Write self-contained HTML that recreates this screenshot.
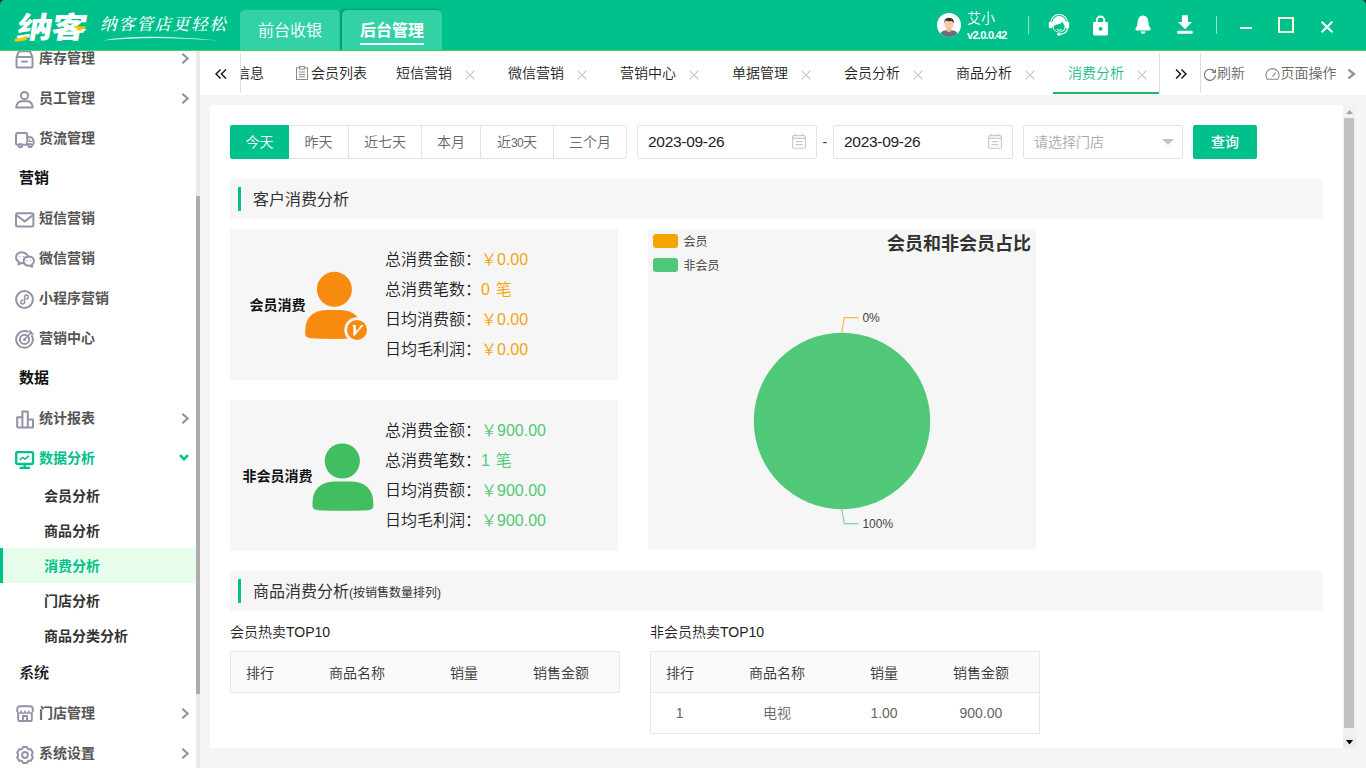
<!DOCTYPE html>
<html lang="zh-CN">
<head>
<meta charset="utf-8">
<title>纳客 - 消费分析</title>
<style>
*{box-sizing:border-box;margin:0;padding:0}
html,body{width:1366px;height:768px;overflow:hidden;background:#f5f5f5}
body{font-family:"Liberation Sans","Noto Sans CJK SC",sans-serif;font-size:14px;color:#333;position:relative;font-weight:350}
.abs{position:absolute}
.t{position:absolute;white-space:nowrap;line-height:20px;height:20px}
svg{display:block;position:absolute;overflow:visible}

/* ---------- top header ---------- */
#hdr{position:absolute;left:0;top:0;width:1366px;height:51px;background:#00c08b;border-bottom:1px solid #46d665}
.htab{position:absolute;top:10px;height:40px;width:100px;background:#33d1a6;border-radius:5px 5px 0 0;color:#fff;font-size:16px;line-height:42px;text-align:center}
.hsep{position:absolute;top:16px;width:1px;height:18px;background:rgba(255,255,255,.55)}

/* ---------- sidebar ---------- */
#side{position:absolute;left:0;top:51px;width:200px;height:717px;background:#fff;overflow:hidden}
.mi{position:absolute;left:39px;font-size:14px;font-weight:bold;color:#555;line-height:20px;white-space:nowrap}
.mh{position:absolute;left:19px;font-size:15px;font-weight:bold;color:#111;line-height:20px;white-space:nowrap}
.ms{position:absolute;left:44px;font-size:14px;font-weight:bold;color:#333;line-height:20px;white-space:nowrap}

/* ---------- tab strip ---------- */
#tabs{position:absolute;left:200px;top:51px;width:1166px;height:44px;background:#fff}
.tb{position:absolute;top:12px;font-size:14px;line-height:20px;color:#222;white-space:nowrap}
.vl{position:absolute;top:2px;width:1px;height:40px;background:#ddd}

/* ---------- main panel ---------- */
#panel{position:absolute;left:210px;top:105px;width:1133px;height:643px;background:#fff}

/* panel content */
.bg{position:absolute;top:20px;height:34px;border:1px solid #e2e2e2;border-left:none;background:#fff;color:#666;font-size:14px;line-height:32px;text-align:center;white-space:nowrap}
.inp{position:absolute;top:20px;height:34px;border:1px solid #e2e2e2;border-radius:2px;background:#fff;font-size:14px;line-height:32px;padding-left:10px;color:#222;white-space:nowrap}
.sec{position:absolute;left:20px;width:1093px;height:40px;background:#f6f6f6}
.sec i{position:absolute;left:8px;top:8px;width:3px;height:24px;background:#00c08b}
.sec b{position:absolute;left:23px;top:0;font-weight:normal;font-size:16px;line-height:42px;color:#333;white-space:nowrap}
.card{position:absolute;left:20px;width:388px;height:151px;background:#f6f6f6}
.ct{position:absolute;font-size:14px;font-weight:bold;color:#111;line-height:20px;white-space:nowrap}
.row{position:absolute;left:155px;font-size:16px;line-height:30px;height:30px;color:#222;white-space:nowrap}
.row span{position:absolute;left:96px;top:0}
.or{color:#f4a40f}.gr{color:#50c878}
.tt{position:absolute;font-size:14px;line-height:20px;color:#222;white-space:nowrap}
.tbl{position:absolute;width:390px;border:1px solid #e8e8e8;background:#fff}
.tbl .hd{position:relative;height:40px;background:#fafafa;color:#333}
.tbl .rw{position:relative;height:41px;border-top:1px solid #e8e8e8;color:#666}
.tbl span{position:absolute;top:0;line-height:41px;font-size:14px;white-space:nowrap}
.tbl .hd span{line-height:42px}
.tbl .rw span{transform:translateX(-50%)}
</style>
</head>
<body>
<div id="hdr">
  <!-- window corner notches -->
  <svg width="5" height="5" style="left:0;top:0"><path d="M0 0H4.6A4.6 4.6 0 0 0 0 4.6Z" fill="#35232a"/></svg>
  <svg width="5" height="5" style="left:1361px;top:0"><path d="M5 0H.4A4.6 4.6 0 0 1 5 4.6Z" fill="#35232a"/></svg>
  <!-- logo -->
  <div class="abs" id="logo" style="left:17.5px;top:2.5px;width:64px;height:44px;font-family:'Noto Sans CJK SC',sans-serif;font-weight:900;font-size:29.5px;line-height:44px;color:#fff;white-space:nowrap;transform-origin:0 50%;transform:scaleX(1.2) skewX(-8deg);letter-spacing:-1px">纳客</div>
  <svg width="90" height="50" style="left:0;top:0">
    <path d="M15 38.5Q21 38.8 27.5 35.5L26.5 40Q21 42 14.5 41.2Z" fill="#fdc40a"/>
    <path d="M73 25.8Q79 27 86.5 26.2Q83 30.5 78.5 30.8Q76 28 73 25.8Z" fill="#fdc40a"/>
  </svg>
  <div class="abs" id="slogan" style="left:100px;top:11px;font-family:'Noto Serif CJK SC',serif;font-style:italic;font-weight:500;font-size:16.5px;line-height:24px;letter-spacing:1.7px;color:#fff;white-space:nowrap">纳客管店更轻松</div>
  <svg width="130" height="10" style="left:100px;top:34px"><path d="M3 6.5Q40 -1 118 6.5Q50 1.5 3 6.5Z" fill="#fff" opacity=".92"/></svg>
  <!-- module tabs -->
  <div class="htab" style="left:240px">前台收银</div>
  <div class="htab" style="left:342px;font-weight:bold;box-shadow:-1.5px -.5px 2px rgba(0,70,45,.32)">后台管理<i class="abs" style="left:18px;top:33px;width:64px;height:2px;background:#fff"></i></div>
  <!-- user -->
  <svg width="24" height="24" viewBox="0 0 24 24" style="left:937px;top:13px">
    <defs><clipPath id="avc"><circle cx="12" cy="12" r="12"/></clipPath></defs>
    <circle cx="12" cy="12" r="12" fill="#fff"/>
    <g clip-path="url(#avc)">
      <path d="M2.5 24Q3 17.5 9 17.2H15Q21 17.5 21.5 24Z" fill="#6d7080"/>
      <path d="M9.8 14.5H14.2V18.2Q12 19.6 9.8 18.2Z" fill="#efb98f"/>
      <ellipse cx="12" cy="11.2" rx="4.5" ry="5.2" fill="#f6c9a2"/>
      <path d="M7.2 10.8Q6.6 5 12 4.8Q17.6 5 16.8 10.8Q16.2 8.4 14.6 7.9Q11 8.6 8.6 7.6Q7.6 8.6 7.2 10.8Z" fill="#333"/>
    </g>
  </svg>
  <div class="t" style="left:967px;top:8px;font-size:14px;color:#fff">艾小</div>
  <div class="t" style="left:967px;top:25px;font-size:11px;font-weight:bold;color:#fff;letter-spacing:-.7px">v2.0.0.42</div>
  <i class="hsep" style="left:1028px"></i>
  <!-- headset -->
  <svg width="22" height="23" viewBox="0 0 22 23" style="left:1048px;top:13px" fill="none" stroke="#fff">
    <path d="M2.7 10A8.4 8.6 0 0 1 19.5 10" stroke-width="1.1"/>
    <ellipse cx="11.2" cy="11.3" rx="7.3" ry="8.3" fill="#fff" stroke="none"/>
    <path d="M5.6 13.4Q6.2 11.6 9.4 11.4Q12.6 11.2 14 9.2Q14.6 8.6 14.9 9.4Q15.4 11.4 16.6 12.6Q17 16 14.2 18Q11.2 19.6 8.2 18Q5.2 16.2 5.6 13.4Z" fill="#00c08b" stroke="none"/>
    <path d="M9.2 16.8Q11.2 17.8 13.4 16.8" stroke-width="1" stroke-linecap="round"/>
    <rect x=".8" y="8.8" width="3.6" height="6.5" rx="1.4" fill="#fff" stroke="none"/>
    <rect x="17.7" y="8.8" width="3.5" height="6.7" rx="1.4" fill="#fff" stroke="none"/>
    <path d="M19.6 15Q19 20.4 12.4 21.3" stroke-width="1.2"/>
    <ellipse cx="10.9" cy="21.4" rx="1.8" ry="1.3" fill="#fff" stroke="none"/>
  </svg>
  <!-- lock -->
  <svg width="16" height="21" viewBox="0 0 16 21" style="left:1093px;top:15px">
    <path d="M3.8 8V5.4A3.7 3.8 0 0 1 11.2 5.4V8" fill="none" stroke="#fff" stroke-width="2"/>
    <rect x="0" y="7" width="15" height="13.5" rx="1.4" fill="#fff"/>
    <circle cx="7.5" cy="13.8" r="1.9" fill="#00c08b"/>
  </svg>
  <!-- bell -->
  <svg width="16" height="19" viewBox="0 0 16 19" style="left:1135px;top:15px">
    <path d="M8 0.5Q13.2 1 13.4 7.2Q13.5 11.6 15.6 13.6Q16 15.4 14.6 15.4H1.4Q0 15.4 .4 13.6Q2.5 11.6 2.6 7.2Q2.8 1 8 .5Z" fill="#fff"/>
    <path d="M5.4 16.6H10.6Q10.2 18.8 8 18.8Q5.8 18.8 5.4 16.6Z" fill="#fff"/>
  </svg>
  <!-- download -->
  <svg width="16" height="19" viewBox="0 0 16 19" style="left:1177px;top:15px">
    <path d="M5 .8Q5 .3 5.6 .3H10.4Q11 .3 11 .8V7H15L8 14.2L1 7H5Z" fill="#fff"/>
    <rect x=".3" y="15.8" width="15.4" height="2.9" rx="1" fill="#fff"/>
  </svg>
  <i class="hsep" style="left:1216px"></i>
  <!-- window buttons -->
  <i class="abs" style="left:1240px;top:27px;width:12px;height:2px;background:#fff"></i>
  <i class="abs" style="left:1278px;top:17px;width:16px;height:16px;border:2px solid #f4f9dc"></i>
  <svg width="12" height="12" viewBox="0 0 12 12" style="left:1320.5px;top:20.5px"><path d="M.7 .7L11.3 11.3M11.3 .7L.7 11.3" stroke="#fff" stroke-width="2" fill="none"/></svg>
</div>
<div id="side">
  <svg width="19" height="19" viewBox="0 0 19 19" style="left:15px;top:-1.2px" fill="none" stroke="#9193a6" stroke-width="2" stroke-linejoin="round"><path d="M1.5 7.2L3.6 2.2Q4 1.2 5 1.2H14Q15 1.2 15.4 2.2L17.5 7.2"/><rect x="1.5" y="7" width="16" height="10.6" rx="1.6"/><path d="M6.2 11.6H12.8" stroke-width="2"/></svg>
  <div class="mi" style="top:-3px;color:#555">库存管理</div>
  <svg width="8" height="11" viewBox="0 0 8 11" style="left:181px;top:2.0px"><path d="M1.4 .8L6.6 5.5L1.4 10.2" fill="none" stroke="#9193a6" stroke-width="2.2"/></svg>
  <svg width="19" height="19" viewBox="0 0 19 19" style="left:15px;top:38.8px" fill="none" stroke="#9193a6" stroke-width="2" stroke-linejoin="round"><circle cx="9.5" cy="5.6" r="3.6"/><path d="M1.2 17.4Q1.8 11.6 6.4 11.2H12.6Q17.2 11.6 17.8 17.4Z"/></svg>
  <div class="mi" style="top:37px;color:#555">员工管理</div>
  <svg width="8" height="11" viewBox="0 0 8 11" style="left:181px;top:42.0px"><path d="M1.4 .8L6.6 5.5L1.4 10.2" fill="none" stroke="#9193a6" stroke-width="2.2"/></svg>
  <svg width="20" height="18" viewBox="0 0 20 18" style="left:15px;top:80px" fill="none" stroke="#9193a6" stroke-width="2" stroke-linejoin="round"><path d="M12.2 13.8H7.6M3.2 13.8H2.4Q1 13.8 1 12.4V3.4Q1 2 2.4 2H10.8Q12.2 2 12.2 3.4V13.8"/><path d="M12.2 6.2H15.6Q17 6.2 17.6 7.4L18.6 9.6V12.6Q18.6 13.8 17.4 13.8H16.8M13.6 13.8H12.2"/><circle cx="5.4" cy="14.6" r="1.7"/><circle cx="15.2" cy="14.6" r="1.7"/><path d="M14.4 8.4V10.4H17.6" stroke-width="1.3"/></svg>
  <div class="mi" style="top:77px;color:#555">货流管理</div>
  <div class="mh" style="top:117px;">营销</div>
  <svg width="20" height="16" viewBox="0 0 20 16" style="left:15px;top:160.6px" fill="none" stroke="#9193a6" stroke-width="2" stroke-linejoin="round"><rect x="1" y="1.2" width="17.4" height="13.2" rx="1.6"/><path d="M1.6 3.2L9.7 9.4L17.8 3.2"/></svg>
  <div class="mi" style="top:157px;color:#555">短信营销</div>
  <svg width="20" height="17" viewBox="0 0 20 17" style="left:15px;top:199.8px" fill="none" stroke="#9193a6" stroke-width="2" stroke-linejoin="round"><path d="M9.4 11.8Q7.8 12.4 6.2 12L3.4 13.4L3.8 10.8Q1 9 1 6.4Q1 3.6 3.4 2.2Q5.6 1 8.2 1.4Q11.6 2 12.8 5"/><path d="M13.6 5.4Q16.4 5.4 18 7.2Q19.6 9.2 18.6 11.6Q18 12.8 16.8 13.6L17.2 15.8L14.8 14.6Q11.6 15.2 9.6 13Q8 11 8.8 8.6Q10 5.6 13.6 5.4Z"/><circle cx="5" cy="5.6" r=".7" fill="#9193a6" stroke="none"/><circle cx="8.6" cy="5.6" r=".7" fill="#9193a6" stroke="none"/><circle cx="11.8" cy="9.6" r=".7" fill="#9193a6" stroke="none"/><circle cx="15.4" cy="9.6" r=".7" fill="#9193a6" stroke="none"/></svg>
  <div class="mi" style="top:197px;color:#555">微信营销</div>
  <svg width="19" height="19" viewBox="0 0 19 19" style="left:15px;top:238.8px" fill="none" stroke="#9193a6" stroke-width="2" stroke-linejoin="round"><circle cx="9.5" cy="9.5" r="8.4"/><path d="M9.6 7.2Q9.6 5 11.6 5Q13.6 5.2 13.4 7.2Q13.2 8.8 11.4 9M9.6 7.2V11.8Q9.6 14 7.6 14Q5.6 13.8 5.8 11.8Q6 10.2 7.8 10" stroke-width="1.5" stroke-linecap="round"/></svg>
  <div class="mi" style="top:237px;color:#555">小程序营销</div>
  <svg width="20" height="20" viewBox="0 0 20 20" style="left:15px;top:277.8px" fill="none" stroke="#9193a6" stroke-width="2" stroke-linejoin="round"><path d="M16.6 6.4Q17.9 8 17.9 10.4A8.4 8.4 0 1 1 9.5 2Q11.8 2 13.6 3.2"/><circle cx="9.5" cy="10.4" r="4.6"/><circle cx="9.5" cy="10.4" r="1.5" fill="#9193a6" stroke="none"/><path d="M9.8 10.1L17 2.8M15.2 1.2V4.8H18.6" stroke-width="1.6"/></svg>
  <div class="mi" style="top:277px;color:#555">营销中心</div>
  <div class="mh" style="top:317px;">数据</div>
  <svg width="18.5" height="19" viewBox="0 0 18.5 19" style="left:16px;top:358.8px" fill="none" stroke="#9193a6" stroke-width="2" stroke-linejoin="round"><path d="M1.2 17.4V7.2H6.4V17.4M6.4 17.4V1.4H11.8V17.4M11.8 17.4V9.6H17V17.4ZM1.2 17.4H17" /></svg>
  <div class="mi" style="top:357px;color:#555">统计报表</div>
  <svg width="8" height="11" viewBox="0 0 8 11" style="left:181px;top:362.0px"><path d="M1.4 .8L6.6 5.5L1.4 10.2" fill="none" stroke="#9193a6" stroke-width="2.2"/></svg>
  <svg width="19" height="18" viewBox="0 0 19 18" style="left:15.4px;top:399.8px" fill="none" stroke="#00c08b" stroke-width="2" stroke-linejoin="round"><rect x="1.2" y="1.2" width="16.8" height="11.8" rx="1.4" stroke-width="2.3"/><path d="M9.6 13V16.6M4.6 16.9H15" stroke-width="2.2"/><path d="M4.8 9L7.6 6.4L10 8.2L13.8 4.6" stroke-width="1.5"/></svg>
  <div class="mi" style="top:397px;color:#00c08b">数据分析</div>
  <svg width="10" height="7" viewBox="0 0 10 7" style="left:179px;top:402.5px"><path d="M1 1.2L5 5.2L9 1.2" fill="none" stroke="#00c08b" stroke-width="2.6"/></svg>
  <div class="ms" style="top:435px;color:#333">会员分析</div>
  <div class="ms" style="top:470px;color:#333">商品分析</div>
  <div class="abs" style="left:0;top:497px;width:196px;height:35px;background:#e7fdeb;border-left:3px solid #00c08b"></div>
  <div class="ms" style="top:505px;color:#00c08b">消费分析</div>
  <div class="ms" style="top:540px;color:#333">门店分析</div>
  <div class="ms" style="top:575px;color:#333">商品分类分析</div>
  <div class="mh" style="top:612px;font-family:'Liberation Serif','Noto Serif CJK SC',serif;font-weight:700;">系统</div>
  <svg width="18.2" height="17.3" viewBox="0 0 20 19" style="left:15.9px;top:653.8px" fill="none" stroke="#9193a6" stroke-width="2.1" stroke-linejoin="round"><path d="M1.4 7.8V4.4Q1.4 1.4 4.4 1.4H15.4Q18.4 1.4 18.4 4.4V7.8"/><path d="M1.4 6.6Q1.6 9 3.6 9Q5.6 9 5.7 6.6Q5.8 9 7.8 9Q9.8 9 9.9 6.6Q10 9 12 9Q14 9 14.1 6.6Q14.2 9 16.2 9Q18.2 9 18.4 6.6" stroke-width="1.5"/><path d="M2.4 9V16.4Q2.4 17.6 3.6 17.6H16.2Q17.4 17.6 17.4 16.4V9M7.6 17.6V12H12.2V17.6"/></svg>
  <div class="mi" style="top:652px;color:#555">门店管理</div>
  <svg width="8" height="11" viewBox="0 0 8 11" style="left:181px;top:657.0px"><path d="M1.4 .8L6.6 5.5L1.4 10.2" fill="none" stroke="#9193a6" stroke-width="2.2"/></svg>
  <svg width="20" height="20" viewBox="0 0 20 20" style="left:14.75px;top:693.6px" fill="none" stroke="#9193a6" stroke-width="2" stroke-linejoin="round"><path d="M12.70 3.65L11.98 2.04L8.02 2.04L7.30 3.65L5.85 4.49L4.10 4.30L2.12 7.74L3.15 9.16L3.15 10.84L2.12 12.26L4.10 15.70L5.85 15.51L7.30 16.35L8.02 17.96L11.98 17.96L12.70 16.35L14.15 15.51L15.90 15.70L17.88 12.26L16.85 10.84L16.85 9.16L17.88 7.74L15.90 4.30L14.15 4.49Z"/><circle cx="10" cy="10" r="2.9"/></svg>
  <div class="mi" style="top:692px;color:#555">系统设置</div>
  <svg width="8" height="11" viewBox="0 0 8 11" style="left:181px;top:697.0px"><path d="M1.4 .8L6.6 5.5L1.4 10.2" fill="none" stroke="#9193a6" stroke-width="2.2"/></svg>
  <div class="abs" style="left:196px;top:0;width:4px;height:717px;background:#e9e9e9"></div>
  <div class="abs" style="left:196px;top:145.0px;width:4px;height:498px;background:#adadad"></div>
</div>
<div id="tabs">
  <svg width="12" height="10" viewBox="0 0 12 10" style="left:15.400000000000006px;top:17.799999999999997px"><path d="M5.6 .4L1 5L5.6 9.6M11 .4L6.4 5L11 9.6" fill="none" stroke="#111" stroke-width="1.4"/></svg>
  <i class="vl" style="left:40px"></i>
  <div class="abs" style="left:41px;top:0;width:918px;height:44px;overflow:hidden"><div class="tb" style="left:-5px">信息</div><svg width="12" height="14" viewBox="0 0 12 14" style="left:55px;top:15px" fill="none" stroke="#8a8a8a" stroke-width="1"><rect x=".5" y="1.8" width="11" height="11.7"/><rect x="3.6" y=".5" width="4.8" height="2.6" fill="#fff"/><path d="M2.8 6H9.2M2.8 8.4H9.2M2.8 10.8H9.2"/></svg><div class="tb" style="left:70px">会员列表</div><div class="tb" style="left:155px;color:#222">短信营销</div><svg width="10" height="10" viewBox="0 0 10 10" style="left:223.60000000000002px;top:18.599999999999994px"><path d="M.6 .6L9.4 9.4M9.4 .6L.6 9.4" stroke="#c4c4c4" stroke-width="1.1" fill="none"/></svg><div class="tb" style="left:267px;color:#222">微信营销</div><svg width="10" height="10" viewBox="0 0 10 10" style="left:335.6px;top:18.599999999999994px"><path d="M.6 .6L9.4 9.4M9.4 .6L.6 9.4" stroke="#c4c4c4" stroke-width="1.1" fill="none"/></svg><div class="tb" style="left:379px;color:#222">营销中心</div><svg width="10" height="10" viewBox="0 0 10 10" style="left:447.6px;top:18.599999999999994px"><path d="M.6 .6L9.4 9.4M9.4 .6L.6 9.4" stroke="#c4c4c4" stroke-width="1.1" fill="none"/></svg><div class="tb" style="left:491px;color:#222">单据管理</div><svg width="10" height="10" viewBox="0 0 10 10" style="left:559.6px;top:18.599999999999994px"><path d="M.6 .6L9.4 9.4M9.4 .6L.6 9.4" stroke="#c4c4c4" stroke-width="1.1" fill="none"/></svg><div class="tb" style="left:603px;color:#222">会员分析</div><svg width="10" height="10" viewBox="0 0 10 10" style="left:671.6px;top:18.599999999999994px"><path d="M.6 .6L9.4 9.4M9.4 .6L.6 9.4" stroke="#c4c4c4" stroke-width="1.1" fill="none"/></svg><div class="tb" style="left:715px;color:#222">商品分析</div><svg width="10" height="10" viewBox="0 0 10 10" style="left:783.5999999999999px;top:18.599999999999994px"><path d="M.6 .6L9.4 9.4M9.4 .6L.6 9.4" stroke="#c4c4c4" stroke-width="1.1" fill="none"/></svg><i class="abs" style="left:812px;top:41px;width:112px;height:2px;background:#21b36a"></i><div class="tb" style="left:827px;color:#1abc8c">消费分析</div><svg width="10" height="10" viewBox="0 0 10 10" style="left:895.5999999999999px;top:18.599999999999994px"><path d="M.6 .6L9.4 9.4M9.4 .6L.6 9.4" stroke="#c4c4c4" stroke-width="1.1" fill="none"/></svg></div>
  <i class="vl" style="left:959px"></i>
  <svg width="12" height="10" viewBox="0 0 12 10" style="left:974.5999999999999px;top:17.799999999999997px"><path d="M1 .4L5.6 5L1 9.6M6.4 .4L11 5L6.4 9.6" fill="none" stroke="#111" stroke-width="1.4"/></svg>
  <i class="vl" style="left:1000px"></i>
  <svg width="13.6" height="13.6" viewBox="0 0 13 13" style="left:1002.6px;top:16px" fill="none" stroke="#777" stroke-width="1.1"><path d="M11.4 5.2A5.3 5.3 0 1 0 11.9 7.6"/><path d="M8.6 4.9L11.8 5.4L12 2.2" stroke-linejoin="round"/></svg>
  <div class="tb" style="left:1017px;color:#666">刷新</div>
  <svg width="15" height="12" viewBox="0 0 15 12" style="left:1065.3px;top:17.200000000000003px" fill="none" stroke="#888" stroke-width="1.1"><path d="M2.2 11.2A6.6 6.6 0 1 1 12.8 11.2Z"/><path d="M7.5 8.6L10.6 4.6"/></svg>
  <div class="tb" style="left:1080.5px;color:#666">页面操作</div>
  <svg width="9" height="10" viewBox="0 0 9 10" style="left:1146.5px;top:17.599999999999994px"><path d="M1.4 .6L7 5L1.4 9.4" fill="none" stroke="#9092a5" stroke-width="2.4"/></svg>
</div>
<div id="panel">
  <div class="bg" style="left:20px;width:59px;background:#00c08b;color:#fff;border-color:#00c08b;border-radius:2px 0 0 2px;border-left:1px solid #00c08b;">今天</div>
  <div class="bg" style="left:79px;width:60px;">昨天</div>
  <div class="bg" style="left:139px;width:73px;">近七天</div>
  <div class="bg" style="left:212px;width:59px;">本月</div>
  <div class="bg" style="left:271px;width:73px;">近<span style="font-size:12px;letter-spacing:-.6px">30</span>天</div>
  <div class="bg" style="left:344px;width:73px;border-radius:0 3px 3px 0;">三个月</div>
  <div class="inp" style="left:427px;width:180px"><span style="font-size:15.5px;letter-spacing:-.3px;position:relative;top:0px">2023-09-26</span><svg width="14" height="16" viewBox="0 0 14 16" style="left:154.3px;top:7px" fill="none" stroke="#c8c8c8" stroke-width="1.1"><rect x=".6" y="2.6" width="12.8" height="12.6" rx="1.2"/><path d="M.6 5.4H13.4M3.6 .4V3M10.4 .4V3M3.6 8.6H10.4M3.6 11.6H10.4"/></svg></div>
  <div class="tt" style="left:612.5px;top:27px;color:#333">-</div>
  <div class="inp" style="left:623px;width:180px"><span style="font-size:15.5px;letter-spacing:-.3px;position:relative;top:0px">2023-09-26</span><svg width="14" height="16" viewBox="0 0 14 16" style="left:154px;top:7px" fill="none" stroke="#c8c8c8" stroke-width="1.1"><rect x=".6" y="2.6" width="12.8" height="12.6" rx="1.2"/><path d="M.6 5.4H13.4M3.6 .4V3M10.4 .4V3M3.6 8.6H10.4M3.6 11.6H10.4"/></svg></div>
  <div class="inp" style="left:813px;width:160px;color:#a9a9a9">请选择门店<svg width="12" height="6" viewBox="0 0 12 6" style="left:137.5px;top:12.5px"><path d="M0 0H12L6 6Z" fill="#c2c2c2"/></svg></div>
  <div class="abs" style="left:983px;top:20px;width:64px;height:34px;border-radius:2px;background:#00c08b;color:#fff;font-size:14px;font-weight:500;line-height:34px;text-align:center">查询</div>
  <div class="sec" style="top:74px"><i></i><b>客户消费分析</b></div>
  <div class="card" style="top:124px"><div class="ct" style="left:19.5px;top:66px">会员消费</div><svg width="70" height="72" viewBox="300 268 70 72" style="left:70px;top:39px">
<circle cx="334.4" cy="289.3" r="17.5" fill="#f68b10"/>
<path d="M305.2 334V331C305.2 317 313.5 310.6 326 310.1H341C353.5 310.6 361.6 317 361.6 331V334Q361.6 337.6 356 338.3Q333.4 339.5 310.6 338.3Q305.2 337.6 305.2 334Z" fill="#f68b10"/>
<circle cx="357" cy="329.9" r="12.7" fill="#f6f6f6"/>
<circle cx="357" cy="329.9" r="10" fill="#f68b10"/>
<path d="M351.9 325L355.6 324.9L356.4 331.4L361.2 325L363.6 325L354.6 335.8L353.2 335.8L353.4 326.6Z" fill="#fff"/>
</svg><div class="row" style="top:15.5px">总消费金额：<span class="or">￥0.00</span></div><div class="row" style="top:45.5px">总消费笔数：<span class="or" style="word-spacing:1.5px">0 笔</span></div><div class="row" style="top:75.5px">日均消费额：<span class="or">￥0.00</span></div><div class="row" style="top:105.5px">日均毛利润：<span class="or">￥0.00</span></div></div>
  <div class="card" style="top:295px"><div class="ct" style="left:12.5px;top:66px">非会员消费</div><svg width="70" height="72" viewBox="308 440 70 72" style="left:78px;top:40px">
<circle cx="342.3" cy="461" r="17.6" fill="#40be60"/>
<path d="M312.5 506V503C312.5 489 321 482 334 481.5H351.6C364.8 482 373.3 489 373.3 503V506Q373.3 509.5 368 510.2Q343 511.4 318 510.2Q312.5 509.5 312.5 506Z" fill="#40be60"/>
</svg><div class="row" style="top:15.5px">总消费金额：<span class="gr">￥900.00</span></div><div class="row" style="top:45.5px">总消费笔数：<span class="gr" style="word-spacing:1.5px">1 笔</span></div><div class="row" style="top:75.5px">日均消费额：<span class="gr">￥900.00</span></div><div class="row" style="top:105.5px">日均毛利润：<span class="gr">￥900.00</span></div></div>
  <svg id="chart" width="388" height="320" viewBox="0 0 388 320" style="left:438px;top:124px;font-family:'Liberation Sans','Noto Sans CJK SC',sans-serif">
<rect width="388" height="320" fill="#f6f6f6"/>
<rect x="5" y="5" width="25" height="14" rx="3" fill="#f5a500"/>
<text x="35.5" y="17" font-size="12" fill="#333">会员</text>
<rect x="5" y="29" width="25" height="14" rx="3" fill="#50c878"/>
<text x="35.5" y="41" font-size="12" fill="#333">非会员</text>
<text x="383" y="21" font-size="18" font-weight="bold" fill="#333" text-anchor="end">会员和非会员占比</text>
<circle cx="194" cy="192" r="88.2" fill="#50c878"/>
<path d="M193.7 104L196.3 88.7H210.6" fill="none" stroke="#f5b945" stroke-width="1.2"/>
<text x="214.4" y="93" font-size="12" fill="#444">0%</text>
<path d="M193.7 280L196.3 294.7H210.6" fill="none" stroke="#7fd79c" stroke-width="1.2"/>
<text x="214.4" y="299" font-size="12" fill="#444">100%</text>
</svg>
  <div class="sec" style="top:466px"><i></i><b>商品消费分析<span style="font-size:12px">(按销售数量排列)</span></b></div>
  <div class="tt" style="left:20px;top:516.5px">会员热卖TOP10</div>
  <div class="tt" style="left:440px;top:516.5px">非会员热卖TOP10</div>
  <div class="tbl" style="left:20px;top:546px"><div class="hd"><span style="left:15px">排行</span><span style="left:98px">商品名称</span><span style="left:219px">销量</span><span style="left:302px">销售金额</span></div></div>
  <div class="tbl" style="left:440px;top:546px"><div class="hd"><span style="left:15px">排行</span><span style="left:98px">商品名称</span><span style="left:219px">销量</span><span style="left:302px">销售金额</span></div><div class="rw"><span style="left:28.600000000000023px">1</span><span style="left:126px">电视</span><span style="left:233px">1.00</span><span style="left:329.79999999999995px">900.00</span></div></div>
</div>
<div id="vsb" class="abs" style="left:1343px;top:105px;width:13px;height:643px;background:#f1f1f1">
  <svg width="7" height="4" style="left:3px;top:5px"><path d="M0 4L3.5 0L7 4Z" fill="#a3a3a3"/></svg>
  <i class="abs" style="left:1px;top:13px;width:10px;height:610px;background:#c1c1c1"></i>
  <i class="abs" style="left:0;top:631px;width:13px;height:12px;background:#ececec"></i>
  <svg width="7" height="5" style="left:3px;top:634.5px"><path d="M0 0H7L3.5 4.6Z" fill="#000"/></svg>
</div></body>
</html>
